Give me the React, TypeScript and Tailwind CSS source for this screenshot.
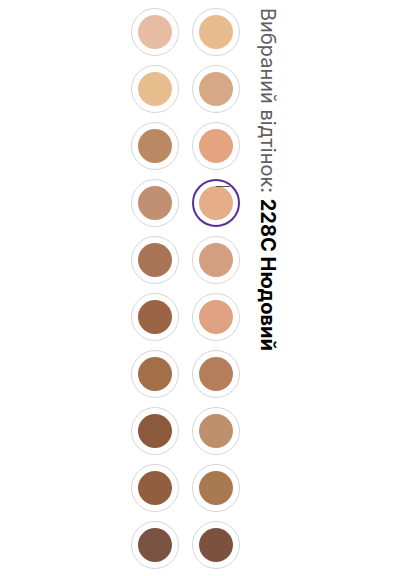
import { useState } from "react";

type Shade = { code: string; name: string; color: string };

const shades: Shade[] = [
  { code: "101C", name: "Порцеляновий", color: "#e8bca2" },
  { code: "102C", name: "Світлий беж", color: "#e8bb8d" },
  { code: "103C", name: "Ванільний", color: "#e8bd8e" },
  { code: "104C", name: "Пісочний", color: "#d6a886" },
  { code: "205C", name: "Карамельний", color: "#ba8862" },
  { code: "206C", name: "Персиковий", color: "#e3a47f" },
  { code: "207C", name: "Натуральний", color: "#c18f72" },
  { code: "228C", name: "Нюдовий", color: "#e5ae88" },
  { code: "309C", name: "Горіховий", color: "#a87456" },
  { code: "310C", name: "Медовий", color: "#d39f80" },
  { code: "311C", name: "Кавовий", color: "#9a6445" },
  { code: "312C", name: "Абрикосовий", color: "#e0a283" },
  { code: "413C", name: "Бронзовий", color: "#a36e48" },
  { code: "414C", name: "Теплий беж", color: "#b47e5d" },
  { code: "415C", name: "Каштановий", color: "#8b593b" },
  { code: "416C", name: "Золотистий", color: "#be8f6b" },
  { code: "417C", name: "Тоффі", color: "#925e3f" },
  { code: "418C", name: "Мигдальний", color: "#a8794f" },
  { code: "519C", name: "Шоколадний", color: "#7a5343" },
  { code: "520C", name: "Какао", color: "#7c523f" },
];

export default function App() {
  const [selected, setSelected] = useState(7);
  const current = shades[selected];

  return (
    <div className="min-h-[576px] bg-white pl-[131px] pt-2 flex items-start font-['Inter',sans-serif]">
      {/* Swatch grid */}
      <div className="grid grid-cols-[48px_48px] gap-x-[13px] gap-y-[9px]">
        {shades.map((s, i) => (
          <button
            key={s.code}
            onClick={() => setSelected(i)}
            aria-label={`${s.code} ${s.name}`}
            className={
              i === selected
                ? "relative w-12 h-12 rounded-full bg-white border-2 border-[#5b2c93] flex items-center justify-center"
                : "relative w-12 h-12 rounded-full bg-white border border-[#d6d6d6] flex items-center justify-center"
            }
          >
            <span
              className="block w-[34px] h-[34px] rounded-full"
              style={{ backgroundColor: s.color }}
            />
            {i === selected && (
              <span className="absolute left-[22px] top-[5px] w-[14px] h-px bg-[#555]" />
            )}
          </button>
        ))}
      </div>

      {/* Selected shade label, vertical */}
      <p className="ml-[16px] [writing-mode:vertical-rl] text-[20px] leading-[24px] whitespace-nowrap">
        <span className="text-[#5f5f5f]">Вибраний відтінок: </span>
        <span className="font-bold text-black">
          {current.code} {current.name}
        </span>
      </p>
    </div>
  );
}
